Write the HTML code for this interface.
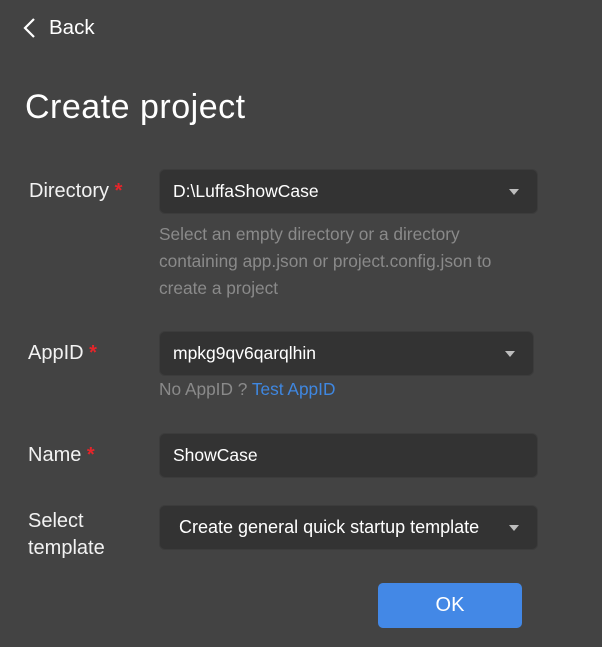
<!DOCTYPE html>
<html><head><style>
body{margin:0;width:602px;height:647px;background:#434343;font-family:"Liberation Sans","DejaVu Sans",sans-serif;color:#fff;position:relative;overflow:hidden}
.a{position:absolute;white-space:nowrap}
.lbl{font-size:20px;color:#f2f2f2}
.st{color:#e5252a;font-weight:bold}
.box{position:absolute;background:#333333;border:1px solid #3c3c3c;border-radius:6px;box-sizing:border-box;font-size:17.5px;color:#fff;padding-left:13px;display:flex;align-items:center}
.tri{position:absolute;right:18px;top:19px;width:0;height:0;border-left:5px solid transparent;border-right:5px solid transparent;border-top:6px solid #bdbdbd}
.hint{font-size:17.3px;color:#8a8a8a;line-height:27px}
</style></head><body>
<svg class="a" style="left:22px;top:17px" width="16" height="22" viewBox="0 0 16 22"><path d="M12 2 L3 11 L12 20" stroke="#fff" stroke-width="2.2" fill="none"/></svg>
<div class="a" style="left:49px;top:16px;font-size:20.5px">Back</div>
<div class="a" style="left:25px;top:88px;font-size:34px;letter-spacing:0.5px">Create project</div>

<div class="a lbl" style="left:29px;top:180px">Directory <span class="st">*</span></div>
<div class="box" style="left:159px;top:169px;width:379px;height:45px">D:\LuffaShowCase<div class="tri"></div></div>
<div class="a hint" style="left:159px;top:221px">Select an empty directory or a directory<br>containing app.json or project.config.json to<br>create a project</div>

<div class="a lbl" style="left:28px;top:342px">AppID <span class="st">*</span></div>
<div class="box" style="left:159px;top:331px;width:375px;height:45px">mpkg9qv6qarqlhin<div class="tri"></div></div>
<div class="a hint" style="left:159px;top:376px">No AppID ? <span style="color:#3f87e0">Test AppID</span></div>

<div class="a lbl" style="left:28px;top:444px">Name <span class="st">*</span></div>
<div class="box" style="left:159px;top:433px;width:379px;height:45px">ShowCase</div>

<div class="a lbl" style="left:28px;top:508px;line-height:27px">Select<br>template</div>
<div class="box" style="left:159px;top:505px;width:379px;height:45px;padding-left:19px;font-size:18px">Create general quick startup template<div class="tri"></div></div>

<div class="a" style="left:378px;top:583px;width:144px;height:45px;background:#4388e6;border-radius:5px;font-size:20px;display:flex;align-items:center;justify-content:center">OK</div>
</body></html>
